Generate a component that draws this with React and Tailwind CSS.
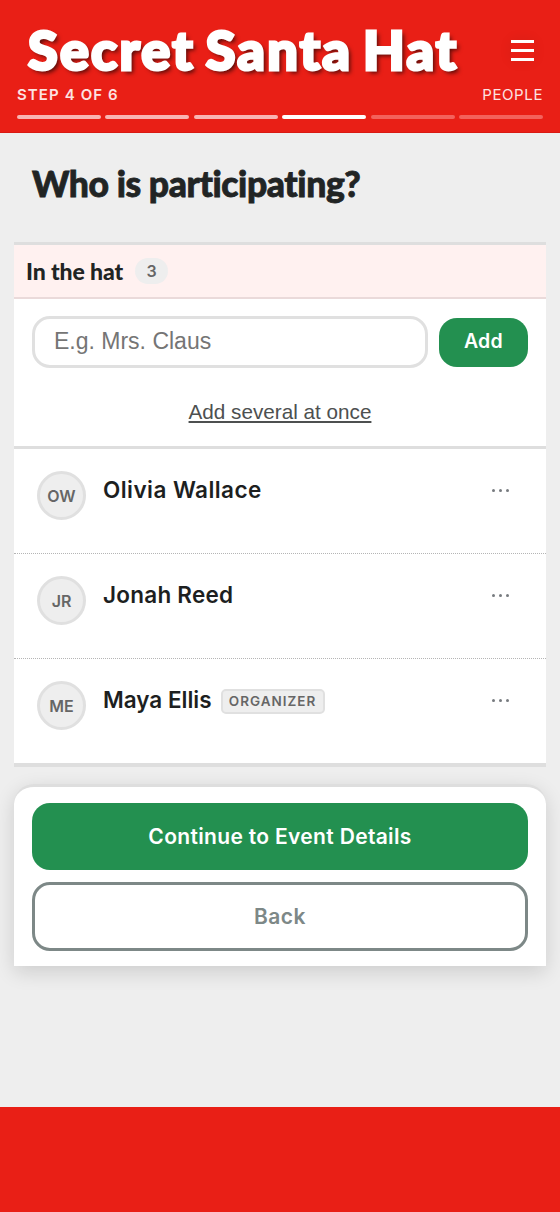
const TOTAL_STEPS = 6;
const CURRENT_STEP = 4;

const people = [
  { id: 1, name: "Olivia Wallace", initials: "OW", tracking: "tracking-[0.45px]" },
  { id: 2, name: "Jonah Reed", initials: "JR", tracking: "tracking-[0.25px]" },
  { id: 3, name: "Maya Ellis", initials: "ME", tracking: "tracking-[0px]", organizer: true },
];

function stepColor(step) {
  if (step < CURRENT_STEP) return "bg-[#f9b4b2]";
  if (step === CURRENT_STEP) return "bg-white";
  return "bg-[#f3625c]";
}

function Header() {
  return (
    <header className="h-[133px] border-b border-[#d91a12] bg-[#e91f16] px-[17px] pt-[17px] text-white">
      <div className="flex h-[66px] items-center justify-between pr-[9px] pl-[11px]">
        <h1 className="font-['Lato',sans-serif] text-[54px] leading-[62px] font-black tracking-[2.2px] whitespace-nowrap [-webkit-text-stroke:3px_white] [text-shadow:3px_3px_4px_rgba(0,0,0,0.65)] [word-spacing:-4px]">
          Secret Santa Hat
        </h1>
        <button type="button" aria-label="Menu" className="flex w-[23px] flex-col gap-1.5 shadow-[0_0_14px_rgba(0,0,0,0.07)]">
          <span className="h-[3px] bg-white" />
          <span className="h-[3px] bg-white" />
          <span className="h-[3px] bg-white" />
        </button>
      </div>
      <div className="mt-px flex h-[22px] items-center justify-between text-[15px]">
        <span className="font-semibold tracking-[1.1px] text-[#fde3e2]">STEP 4 OF 6</span>
        <span className="tracking-[0.6px] text-[#fde3e2]">PEOPLE</span>
      </div>
      <div className="mt-[9px] flex gap-[4.5px]">
        {Array.from({ length: TOTAL_STEPS }, (_, i) => (
          <span key={i} className={`h-1 flex-1 rounded-full ${stepColor(i + 1)}`} />
        ))}
      </div>
    </header>
  );
}

function PersonRow({ person }) {
  return (
    <li className="flex h-[105px] items-start border-b border-dotted border-[#b5b5b5] pt-[22px] pr-[37px] pl-[23px] last:h-[104px] last:border-b-0">
      <span className="flex size-[49px] shrink-0 items-center justify-center rounded-full border-3 border-[#e0e0e0] bg-[#eee] text-[16px] font-semibold text-[#666]">
        {person.initials}
      </span>
      <div className="ml-[17px] flex h-[38px] flex-1 items-center">
        <span className={`text-[22.5px] font-semibold text-[#1d1f1f] ${person.tracking}`}>{person.name}</span>
        {person.organizer && (
          <span className="mt-0.5 ml-[9px] flex h-[25px] w-[104px] items-center justify-center rounded-[5px] border-2 border-[#e0e0e0] bg-[#eee] text-[13.5px] font-semibold tracking-[1px] text-[#666]">
            ORGANIZER
          </span>
        )}
      </div>
      <button type="button" aria-label={`Options for ${person.name}`} className="flex h-[38px] items-center gap-1">
        <span className="size-[3px] rounded-full bg-[#777b7f]" />
        <span className="size-[3px] rounded-full bg-[#777b7f]" />
        <span className="size-[3px] rounded-full bg-[#777b7f]" />
      </button>
    </li>
  );
}

export default function App() {
  return (
    <div className="flex h-[1212px] w-[560px] flex-col overflow-hidden bg-[#eee] font-['Inter',sans-serif]">
      <Header />

      <main className="flex-1 px-[14px]">
        <h2 className="mt-[30px] ml-[18px] h-[43px] font-['Lato',sans-serif] text-[35.5px] leading-[42px] font-black tracking-[-0.4px] text-[#212424] [-webkit-text-stroke:0.8px_#212424]">
          Who is participating?
        </h2>

        <section className="mt-[36px] border-t-3 border-b-4 border-[#dedede] bg-white">
          <div className="flex h-[54px] items-center border-b-2 border-[#eadada] bg-[#fff1f0] pl-3">
            <h3 className="font-['Lato',sans-serif] text-[23px] font-black tracking-[-0.1px] text-[#212424]">In the hat</h3>
            <span className="ml-3 flex h-[26px] w-[33px] items-center justify-center rounded-full bg-[#eee] text-[16px] font-semibold text-[#666]">
              3
            </span>
          </div>

          <div className="flex h-[150px] flex-col border-b-3 border-[#dedede] px-[18px] pt-[17px]">
            <div className="flex items-center gap-[11px]">
              <input
                placeholder="E.g. Mrs. Claus"
                className="h-[52px] w-[396px] rounded-[18px] border-3 border-[#e0e0e0] bg-white px-[19px] pb-0.5 font-['Liberation_Sans',sans-serif] text-[23px] placeholder:text-[#757575]"
              />
              <button type="button" className="h-[49px] w-[89px] rounded-[18px] bg-[#239050] text-[19.5px] font-semibold tracking-[0.3px] text-white">
                Add
              </button>
            </div>
            <button
              type="button"
              className="mt-[30px] self-center font-['Liberation_Sans',sans-serif] text-[20.7px] leading-7 text-[#4d5050] underline"
            >
              Add several at once
            </button>
          </div>

          <ul>
            {people.map((person) => (
              <PersonRow key={person.id} person={person} />
            ))}
          </ul>
        </section>

        <section className="mt-[17px] flex flex-col gap-3 rounded-t-[20px] border-t-3 border-[#dedede] bg-white px-[18px] pt-4 pb-[15px] shadow-[0_6px_20px_rgba(0,0,0,0.14)]">
          <button type="button" className="h-[67px] rounded-[18px] bg-[#239050] text-[21px] font-semibold tracking-[0.33px] text-white">
            Continue to Event Details
          </button>
          <button type="button" className="h-[69px] rounded-[18px] border-3 border-[#7d8887] bg-white text-[21px] font-semibold tracking-[0.5px] text-[#7d8887]">
            Back
          </button>
        </section>
      </main>

      <footer className="h-[105px] bg-[#e91f16]" />
    </div>
  );
}
